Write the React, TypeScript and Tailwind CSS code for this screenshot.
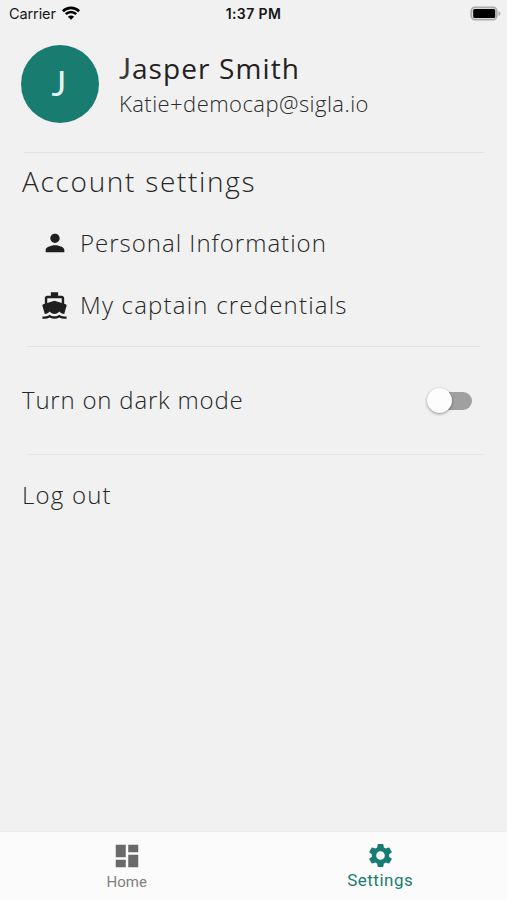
import { MdPerson, MdDirectionsBoat, MdDashboard, MdSettings } from "react-icons/md";

const text = "font-['Open_Sans',sans-serif] whitespace-nowrap";

function StatusBar() {
  return (
    <header className="grid h-7 grid-cols-3 items-center px-2 font-['Inter',sans-serif] text-[#161616]">
      <div className="flex items-center gap-[6px] pl-px">
        <span className="text-[14.5px] leading-7 tracking-[-0.1px]">Carrier</span>
        <svg className="-mt-[2px]" width="18" height="14" viewBox="0 0 18 14" fill="none" stroke="#000" strokeWidth="2.6">
          <path d="M.9 5.2a11.6 11.6 0 0 1 16.2 0" />
          <path d="M3.8 8.2a7.4 7.4 0 0 1 10.4 0" />
          <path d="M9 13.8 5.9 10.7a4.4 4.4 0 0 1 6.2 0Z" fill="#000" stroke="none" />
        </svg>
      </div>
      <span className="-mt-px text-center text-[14px] font-semibold tracking-[0.4px]">1:37 PM</span>
      <svg className="-mr-[2px] -mt-[2px] justify-self-end" width="31" height="15" viewBox="0 0 31 15">
        <rect x="1.200" y="1.200" width="25.600" height="12.600" rx="4" fill="#d8d8d8" stroke="#aaa" strokeWidth="1.600" />
        <rect x="3.200" y="3" width="22" height="9" rx="1.500" fill="#000" />
        <path d="M28.500 5v5q2-1 2-2.500t-2-2.500" fill="#aaa" />
      </svg>
    </header>
  );
}

export default function App() {
  return (
    <div className="flex h-[900px] w-[507px] flex-col bg-[#f1f1f1] text-[#262626]">
      <StatusBar />
      <main className="flex flex-1 flex-col">
        <section className="flex h-[124px] items-start pl-[21px] pt-[17px]">
          <div className="flex size-[78px] items-center justify-center rounded-full bg-[#187d70] pb-[3px] pr-[2px] font-['Lato',sans-serif] text-[35px] leading-none text-[#e6f2f0]">
            J
          </div>
          <div className="pl-5 pt-[5px]">
            <h1 className={`${text} text-[28px] leading-9 tracking-[1.1px] text-[#222]`}>
              <span className="font-['Lato',sans-serif] text-[#3a3a3a]">J</span>asper Smith
            </h1>
            <p className={`${text} text-[22px] font-light leading-[34px] tracking-[0.45px] text-[#2c2c2c]`}>Katie+democap@sigla.io</p>
          </div>
        </section>

        <section className="flex h-[194px] flex-col">
          <hr className="ml-6 mr-[23px] border-[#e3e3e3]" />
          <h2 className={`${text} mt-[8px] pl-[22px] text-[28px] font-light leading-10 tracking-[1.7px]`}>Account settings</h2>
          <div className="flex h-[63px] items-center pl-[41px] pt-[21px]">
            <MdPerson size={28} color="#1f1f1f" />
            <span className={`${text} pl-[11px] text-[24px] font-light leading-8 tracking-[1px]`}>Personal Information</span>
          </div>
          <div className="flex h-[62px] items-center pl-[40px] pt-[20px]">
            <MdDirectionsBoat size={29} color="#1f1f1f" />
            <span className={`${text} pl-[11px] text-[24px] font-light leading-8 tracking-[1.2px]`}>My captain credentials</span>
          </div>
        </section>

        <section className="h-[108px]">
          <hr className="ml-[27px] mr-[27px] border-[#e3e3e3]" />
          <div className="flex h-[107px] items-center justify-between pl-[22px] pr-[35px]">
            <span className={`${text} -mt-[2px] text-[24px] font-light tracking-[0.8px]`}>Turn on dark mode</span>
            <button aria-label="Dark mode" className="flex h-[18px] w-[43px] items-center rounded-full bg-[#a0a0a0]">
              <span className="-ml-[2px] size-[25px] shrink-0 rounded-full bg-[#fdfdfd] shadow-[0_1px_3px_rgba(0,0,0,0.4)]" />
            </button>
          </div>
        </section>

        <section>
          <hr className="ml-[27px] mr-[23px] border-[#e6e6e6]" />
          <div className={`${text} flex h-[80px] items-center pl-[22px] text-[24px] font-light tracking-[1.2px]`}>Log out</div>
        </section>
      </main>

      <nav className="grid h-[69px] grid-cols-2 border-t border-[#ececec] bg-[#fbfbfb] font-['Roboto',sans-serif]">
        <div className="flex flex-col items-center pt-[9px] text-[#808080]">
          <MdDashboard size={30} color="#696969" />
          <span className="mt-px text-[15px] leading-5">Home</span>
        </div>
        <div className="flex flex-col items-center pt-[9px] text-[#187d70]">
          <MdSettings size={29} />
          <span className="-mt-px text-[17px] leading-[22px] tracking-[0.5px]">Settings</span>
        </div>
      </nav>
    </div>
  );
}
